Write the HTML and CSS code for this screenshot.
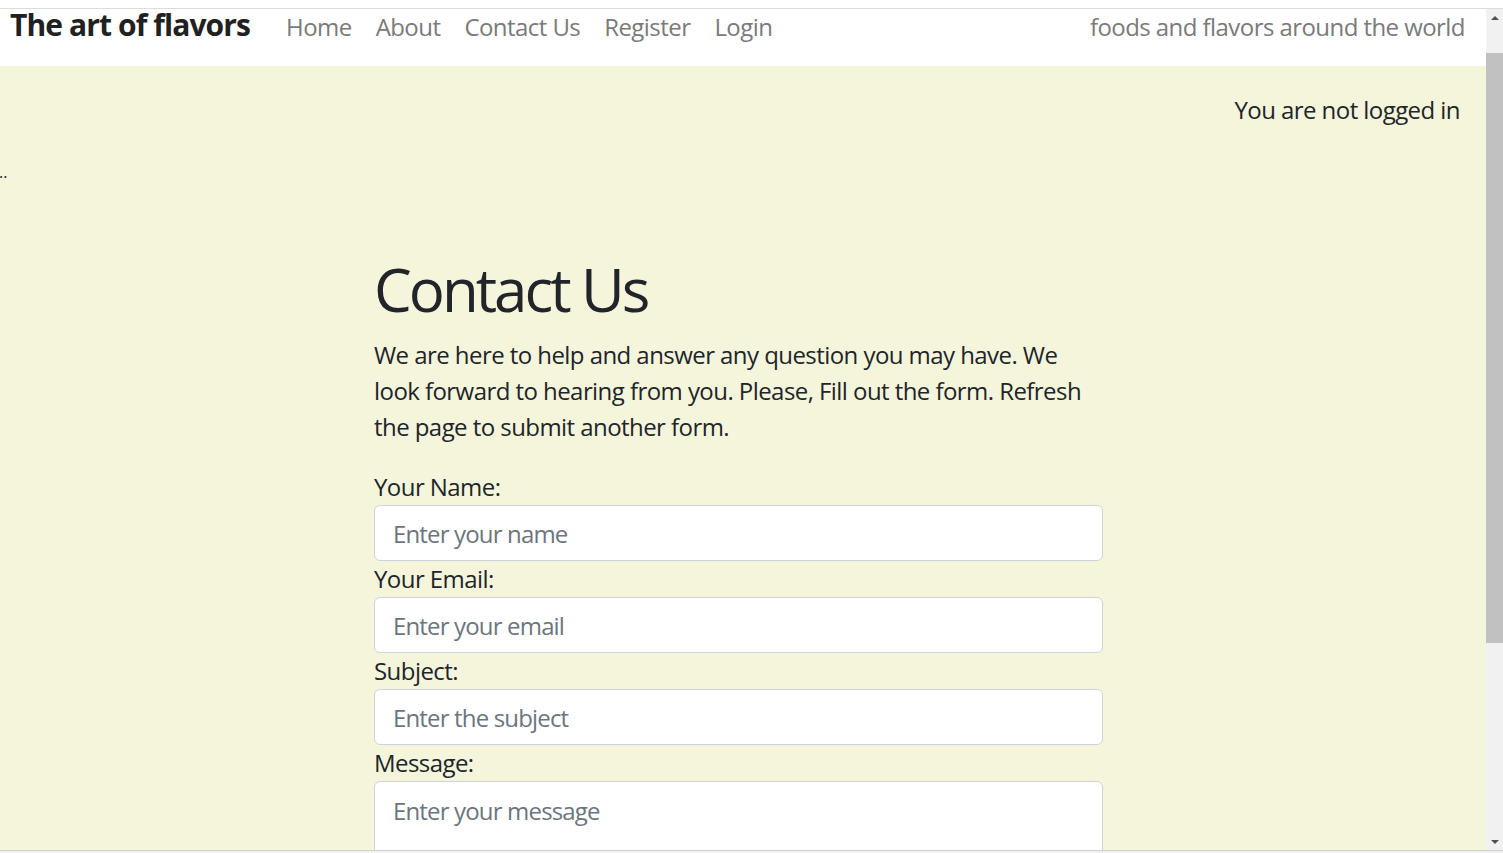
FILE: index.html
```html
<!DOCTYPE html>
<html lang="en">
<head>
<meta charset="utf-8">
<title>The art of flavors - Contact Us</title>
<link rel="stylesheet" href="styles.css">
</head>
<body>
<div class="frame-top"></div>
<div class="viewport">
  <div class="page">
    <nav class="navbar">
      <a class="brand" href="#">The art of flavors</a>
      <ul class="nav">
        <li><a class="nav-link" href="#">Home</a></li>
        <li><a class="nav-link" href="#">About</a></li>
        <li><a class="nav-link" href="#">Contact Us</a></li>
        <li><a class="nav-link" href="#">Register</a></li>
        <li><a class="nav-link" href="#">Login</a></li>
      </ul>
      <span class="tagline">foods and flavors around the world</span>
    </nav>
    <main class="content">
      <p class="status">You are not logged in</p>
      <div class="dots">..</div>
      <section class="contact">
        <h1 class="title">Contact Us</h1>
        <p class="lead">We are here to help and answer any question you may have. We look forward to hearing from you. Please, Fill out the form. Refresh the page to submit another form.</p>
        <form class="form">
          <label class="label" for="name">Your Name:</label>
          <input class="field" id="name" type="text" placeholder="Enter your name">
          <label class="label" for="email">Your Email:</label>
          <input class="field" id="email" type="email" placeholder="Enter your email">
          <label class="label" for="subject">Subject:</label>
          <input class="field" id="subject" type="text" placeholder="Enter the subject">
          <label class="label" for="message">Message:</label>
          <textarea class="field area" id="message" placeholder="Enter your message"></textarea>
        </form>
      </section>
    </main>
  </div>
  <div class="scrollbar">
    <div class="sb-btn"><span class="tri up"></span></div>
    <div class="sb-track">
      <div class="sb-thumb"></div>
    </div>
    <div class="sb-btn"><span class="tri down"></span></div>
  </div>
</div>
<div class="frame-bottom"></div>
</body>
</html>
```

FILE: styles.css
```css
* { box-sizing: border-box; }

html, body {
  margin: 0;
  padding: 0;
  height: 853px;
  overflow: hidden;
  background: #ffffff;
  font-family: "Open Sans", "Noto Sans", sans-serif;
  color: #212529;
}

.frame-top {
  height: 9px;
  background: #ffffff;
  border-bottom: 1px solid #dcdcdc;
}

.viewport {
  display: flex;
  height: 841px;
}

.page {
  flex: 1;
  min-width: 0;
  background: #f5f5dc;
  display: flex;
  flex-direction: column;
}

.navbar {
  background: #ffffff;
  height: 57px;
  flex-shrink: 0;
  display: flex;
  align-items: flex-start;
  padding: 0 21px 0 10px;
  letter-spacing: -0.035em;
}

.brand {
  font-size: 30px;
  font-weight: 700;
  line-height: 32px;
  color: #212121;
  text-decoration: none;
  margin-right: 24px;
  letter-spacing: -0.03em;
}

.nav {
  display: flex;
  list-style: none;
  margin: 0;
  padding: 0;
}

.nav-link {
  display: block;
  padding: 0 12px;
  font-size: 24px;
  line-height: 35px;
  color: #7a7a7a;
  text-decoration: none;
}

.tagline {
  margin-left: auto;
  font-size: 24px;
  line-height: 35px;
  color: #7a7a7a;
}

.content {
  flex: 1;
  min-height: 0;
  overflow: hidden;
  display: flex;
  flex-direction: column;
  letter-spacing: -0.035em;
}

.status {
  margin: 26px 26px 0 0;
  text-align: right;
  font-size: 24px;
  line-height: 36px;
}

.dots {
  margin: 34px 0 0 -1px;
  font-size: 16px;
  line-height: 20px;
  letter-spacing: 0;
}

.contact {
  width: 729px;
  margin: 71px 0 0 374px;
}

.title {
  margin: 0 0 12px;
  font-size: 60px;
  font-weight: 500;
  line-height: 72px;
  letter-spacing: -0.05em;
}

.lead {
  margin: 0 0 24px;
  font-size: 24px;
  line-height: 36px;
}

.form {
  display: flex;
  flex-direction: column;
}

.label {
  font-size: 24px;
  line-height: 36px;
}

.field {
  display: block;
  width: 729px;
  height: 56px;
  flex-shrink: 0;
  margin: 0;
  padding: 0 18px;
  font-family: inherit;
  font-size: 24px;
  letter-spacing: -0.035em;
  color: #495057;
  background: #ffffff;
  border: 1px solid #ced4da;
  border-radius: 6px;
  outline: none;
}

.field::placeholder {
  color: #6c757d;
  opacity: 1;
}

.area {
  height: 120px;
  padding: 11px 18px;
  line-height: 36px;
  resize: none;
}

.scrollbar {
  width: 17px;
  flex-shrink: 0;
  background: #f1f1f1;
  display: flex;
  flex-direction: column;
}

.sb-btn {
  height: 17px;
  flex-shrink: 0;
  display: flex;
  align-items: center;
  justify-content: center;
}

.tri {
  width: 0;
  height: 0;
  border-left: 4px solid transparent;
  border-right: 4px solid transparent;
}

.tri.up { border-bottom: 4px solid #505050; }
.tri.down { border-top: 4px solid #505050; }

.sb-track {
  flex: 1;
  padding-top: 27px;
}

.sb-thumb {
  height: 590px;
  background: #c1c1c1;
}

.frame-bottom {
  height: 3px;
  border-top: 1px solid #d0d0d0;
  background: #f0f0f0;
}
```
